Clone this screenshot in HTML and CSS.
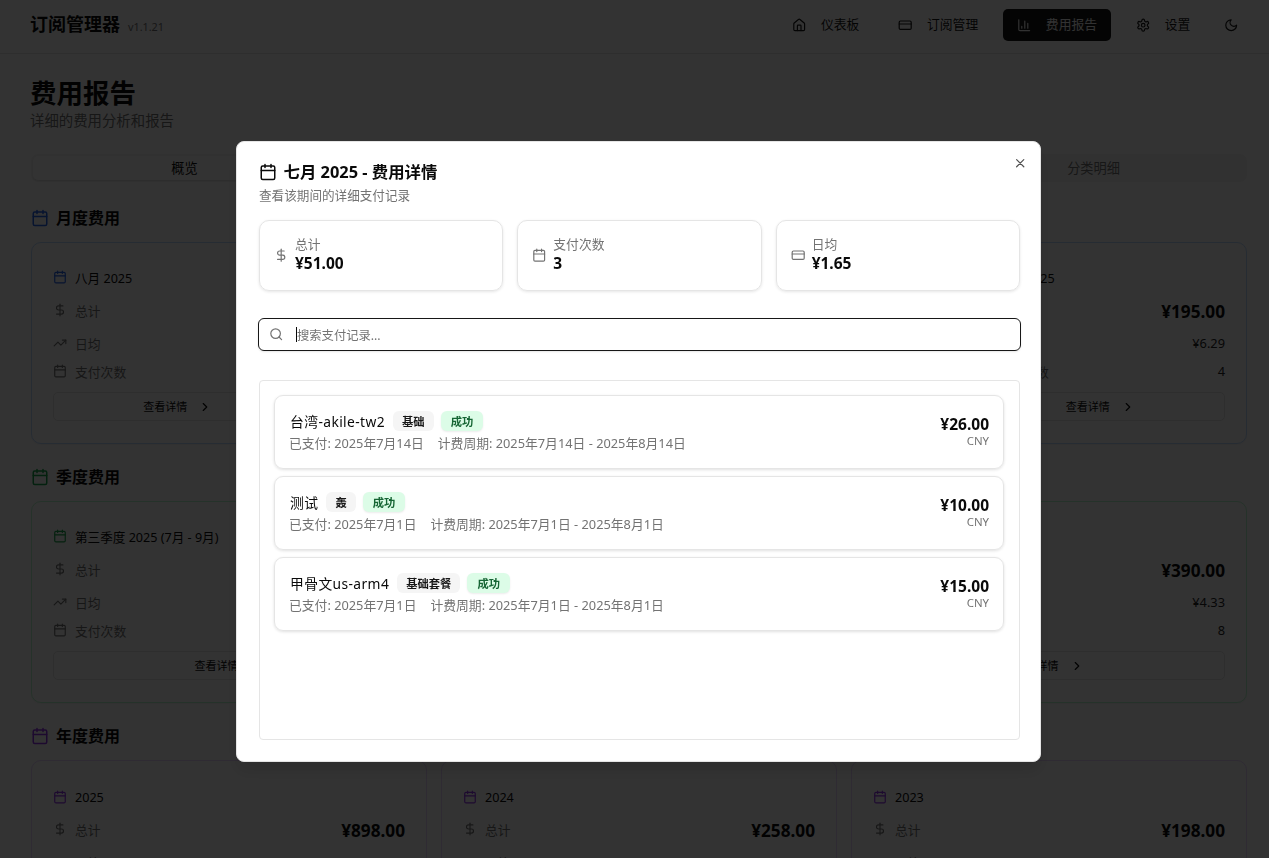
FILE: index.html
```html
<!DOCTYPE html>
<html lang="zh-CN">
<head>
<meta charset="utf-8">
<title>订阅管理器</title>
<link rel="stylesheet" href="styles.css">
</head>
<body>
<svg class="sprite" xmlns="http://www.w3.org/2000/svg">
  <symbol id="i-cal" viewBox="0 0 24 24"><path d="M8 2v4M16 2v4"/><rect x="3" y="4" width="18" height="18" rx="2"/><path d="M3 10h18"/></symbol>
  <symbol id="i-dollar" viewBox="0 0 24 24"><path d="M12 2v20"/><path d="M17 5H9.5a3.5 3.5 0 0 0 0 7h5a3.5 3.5 0 0 1 0 7H6"/></symbol>
  <symbol id="i-trend" viewBox="0 0 24 24"><path d="M22 7l-8.5 8.5-5-5L2 17"/><path d="M16 7h6v6"/></symbol>
  <symbol id="i-card" viewBox="0 0 24 24"><rect x="2" y="5" width="20" height="14" rx="2"/><path d="M2 10h20"/></symbol>
  <symbol id="i-search" viewBox="0 0 24 24"><circle cx="11" cy="11" r="8"/><path d="m21 21-4.3-4.3"/></symbol>
  <symbol id="i-x" viewBox="0 0 24 24"><path d="M18 6 6 18M6 6l12 12"/></symbol>
  <symbol id="i-chev" viewBox="0 0 24 24"><path d="m9 18 6-6-6-6"/></symbol>
  <symbol id="i-home" viewBox="0 0 24 24"><path d="M15 21v-8a1 1 0 0 0-1-1h-4a1 1 0 0 0-1 1v8"/><path d="M3 10a2 2 0 0 1 .709-1.528l7-5.999a2 2 0 0 1 2.582 0l7 5.999A2 2 0 0 1 21 10v9a2 2 0 0 1-2 2H5a2 2 0 0 1-2-2z"/></symbol>
  <symbol id="i-bars" viewBox="0 0 24 24"><path d="M3 3v16a2 2 0 0 0 2 2h16"/><path d="M18 17V9M13 17V5M8 17v-3"/></symbol>
  <symbol id="i-gear" viewBox="0 0 24 24"><path d="M12.22 2h-.44a2 2 0 0 0-2 2v.18a2 2 0 0 1-1 1.73l-.43.25a2 2 0 0 1-2 0l-.15-.08a2 2 0 0 0-2.73.73l-.22.38a2 2 0 0 0 .73 2.73l.15.1a2 2 0 0 1 1 1.72v.51a2 2 0 0 1-1 1.74l-.15.09a2 2 0 0 0-.73 2.73l.22.38a2 2 0 0 0 2.73.73l.15-.08a2 2 0 0 1 2 0l.43.25a2 2 0 0 1 1 1.73V20a2 2 0 0 0 2 2h.44a2 2 0 0 0 2-2v-.18a2 2 0 0 1 1-1.73l.43-.25a2 2 0 0 1 2 0l.15.08a2 2 0 0 0 2.73-.73l.22-.39a2 2 0 0 0-.73-2.73l-.15-.08a2 2 0 0 1-1-1.74v-.5a2 2 0 0 1 1-1.74l.15-.09a2 2 0 0 0 .73-2.73l-.22-.38a2 2 0 0 0-2.73-.73l-.15.08a2 2 0 0 1-2 0l-.43-.25a2 2 0 0 1-1-1.73V4a2 2 0 0 0-2-2z"/><circle cx="12" cy="12" r="3"/></symbol>
  <symbol id="i-moon" viewBox="0 0 24 24"><path d="M12 3a6 6 0 0 0 9 9 9 9 0 1 1-9-9Z"/></symbol>
</svg>

<header class="topbar">
  <div class="brand"><span class="brand-name">订阅管理器</span><span class="version">v1.1.21</span></div>
  <nav class="nav">
    <a class="nav-item"><svg class="ico ico-14"><use href="#i-home"/></svg>仪表板</a>
    <a class="nav-item"><svg class="ico ico-14"><use href="#i-card"/></svg>订阅管理</a>
    <a class="nav-item active"><svg class="ico ico-14"><use href="#i-bars"/></svg>费用报告</a>
    <a class="nav-item"><svg class="ico ico-14"><use href="#i-gear"/></svg>设置</a>
    <a class="theme-btn"><svg class="ico ico-14"><use href="#i-moon"/></svg></a>
  </nav>
</header>

<main class="page">
  <h1 class="page-title">费用报告</h1>
  <p class="page-sub">详细的费用分析和报告</p>
  <div class="tabs">
    <div class="tab active">概览</div>
    <div class="tab">月度趋势</div>
    <div class="tab">支付记录</div>
    <div class="tab">分类明细</div>
  </div>

  <section class="section blue">
    <h2 class="section-title"><svg class="ico ico-18"><use href="#i-cal"/></svg><span class="lift">月度费用</span></h2>
    <div class="grid grid-4">
      <article class="card">
        <div class="card-label"><svg class="ico ico-13 tint"><use href="#i-cal"/></svg>八月 2025</div>
        <div class="row row-total"><span class="row-key"><svg class="ico ico-13"><use href="#i-dollar"/></svg>总计</span><b>¥72.00</b></div>
        <div class="row"><span class="row-key"><svg class="ico ico-13"><use href="#i-trend"/></svg>日均</span><span class="row-val">¥2.32</span></div>
        <div class="row row-count"><span class="row-key"><svg class="ico ico-13"><use href="#i-cal"/></svg>支付次数</span><span class="row-val">3</span></div>
        <button class="detail"><span>查看详情</span><svg class="ico ico-13"><use href="#i-chev"/></svg></button>
      </article>
      <article class="card">
        <div class="card-label"><svg class="ico ico-13 tint"><use href="#i-cal"/></svg>七月 2025</div>
        <div class="row row-total"><span class="row-key"><svg class="ico ico-13"><use href="#i-dollar"/></svg>总计</span><b>¥51.00</b></div>
        <div class="row"><span class="row-key"><svg class="ico ico-13"><use href="#i-trend"/></svg>日均</span><span class="row-val">¥1.65</span></div>
        <div class="row row-count"><span class="row-key"><svg class="ico ico-13"><use href="#i-cal"/></svg>支付次数</span><span class="row-val">3</span></div>
        <button class="detail"><span>查看详情</span><svg class="ico ico-13"><use href="#i-chev"/></svg></button>
      </article>
      <article class="card">
        <div class="card-label"><svg class="ico ico-13 tint"><use href="#i-cal"/></svg>六月 2025</div>
        <div class="row row-total"><span class="row-key"><svg class="ico ico-13"><use href="#i-dollar"/></svg>总计</span><b>¥72.00</b></div>
        <div class="row"><span class="row-key"><svg class="ico ico-13"><use href="#i-trend"/></svg>日均</span><span class="row-val">¥2.40</span></div>
        <div class="row row-count"><span class="row-key"><svg class="ico ico-13"><use href="#i-cal"/></svg>支付次数</span><span class="row-val">1</span></div>
        <button class="detail"><span>查看详情</span><svg class="ico ico-13"><use href="#i-chev"/></svg></button>
      </article>
      <article class="card">
        <div class="card-label"><svg class="ico ico-13 tint"><use href="#i-cal"/></svg>五月 2025</div>
        <div class="row row-total"><span class="row-key"><svg class="ico ico-13"><use href="#i-dollar"/></svg>总计</span><b>¥195.00</b></div>
        <div class="row"><span class="row-key"><svg class="ico ico-13"><use href="#i-trend"/></svg>日均</span><span class="row-val">¥6.29</span></div>
        <div class="row row-count"><span class="row-key"><svg class="ico ico-13"><use href="#i-cal"/></svg>支付次数</span><span class="row-val">4</span></div>
        <button class="detail"><span>查看详情</span><svg class="ico ico-13"><use href="#i-chev"/></svg></button>
      </article>
    </div>
  </section>

  <section class="section green">
    <h2 class="section-title"><svg class="ico ico-18"><use href="#i-cal"/></svg><span class="lift">季度费用</span></h2>
    <div class="grid grid-3">
      <article class="card">
        <div class="card-label"><svg class="ico ico-13 tint"><use href="#i-cal"/></svg>第三季度 2025 (7月 - 9月)</div>
        <div class="row row-total"><span class="row-key"><svg class="ico ico-13"><use href="#i-dollar"/></svg>总计</span><b>¥123.00</b></div>
        <div class="row"><span class="row-key"><svg class="ico ico-13"><use href="#i-trend"/></svg>日均</span><span class="row-val">¥1.34</span></div>
        <div class="row row-count"><span class="row-key"><svg class="ico ico-13"><use href="#i-cal"/></svg>支付次数</span><span class="row-val">6</span></div>
        <button class="detail"><span>查看详情</span><svg class="ico ico-13"><use href="#i-chev"/></svg></button>
      </article>
      <article class="card">
        <div class="card-label"><svg class="ico ico-13 tint"><use href="#i-cal"/></svg>第二季度 2025 (4月 - 6月)</div>
        <div class="row row-total"><span class="row-key"><svg class="ico ico-13"><use href="#i-dollar"/></svg>总计</span><b>¥385.00</b></div>
        <div class="row"><span class="row-key"><svg class="ico ico-13"><use href="#i-trend"/></svg>日均</span><span class="row-val">¥4.23</span></div>
        <div class="row row-count"><span class="row-key"><svg class="ico ico-13"><use href="#i-cal"/></svg>支付次数</span><span class="row-val">7</span></div>
        <button class="detail"><span>查看详情</span><svg class="ico ico-13"><use href="#i-chev"/></svg></button>
      </article>
      <article class="card">
        <div class="card-label"><svg class="ico ico-13 tint"><use href="#i-cal"/></svg>第一季度 2025 (1月 - 3月)</div>
        <div class="row row-total"><span class="row-key"><svg class="ico ico-13"><use href="#i-dollar"/></svg>总计</span><b>¥390.00</b></div>
        <div class="row"><span class="row-key"><svg class="ico ico-13"><use href="#i-trend"/></svg>日均</span><span class="row-val">¥4.33</span></div>
        <div class="row row-count"><span class="row-key"><svg class="ico ico-13"><use href="#i-cal"/></svg>支付次数</span><span class="row-val">8</span></div>
        <button class="detail"><span>查看详情</span><svg class="ico ico-13"><use href="#i-chev"/></svg></button>
      </article>
    </div>
  </section>

  <section class="section purple">
    <h2 class="section-title"><svg class="ico ico-18"><use href="#i-cal"/></svg><span class="lift">年度费用</span></h2>
    <div class="grid grid-3">
      <article class="card">
        <div class="card-label"><svg class="ico ico-13 tint"><use href="#i-cal"/></svg>2025</div>
        <div class="row row-total"><span class="row-key"><svg class="ico ico-13"><use href="#i-dollar"/></svg>总计</span><b>¥898.00</b></div>
        <div class="row"><span class="row-key"><svg class="ico ico-13"><use href="#i-trend"/></svg>日均</span><span class="row-val">¥2.46</span></div>
      </article>
      <article class="card">
        <div class="card-label"><svg class="ico ico-13 tint"><use href="#i-cal"/></svg>2024</div>
        <div class="row row-total"><span class="row-key"><svg class="ico ico-13"><use href="#i-dollar"/></svg>总计</span><b>¥258.00</b></div>
        <div class="row"><span class="row-key"><svg class="ico ico-13"><use href="#i-trend"/></svg>日均</span><span class="row-val">¥0.70</span></div>
      </article>
      <article class="card">
        <div class="card-label"><svg class="ico ico-13 tint"><use href="#i-cal"/></svg>2023</div>
        <div class="row row-total"><span class="row-key"><svg class="ico ico-13"><use href="#i-dollar"/></svg>总计</span><b>¥198.00</b></div>
        <div class="row"><span class="row-key"><svg class="ico ico-13"><use href="#i-trend"/></svg>日均</span><span class="row-val">¥0.54</span></div>
      </article>
    </div>
  </section>
</main>

<div class="overlay"></div>

<div class="modal" role="dialog">
  <button class="close"><svg class="ico ico-14"><use href="#i-x"/></svg></button>
  <h3 class="modal-title"><svg class="ico ico-18"><use href="#i-cal"/></svg><span class="lift">七月 2025 - 费用详情</span></h3>
  <p class="modal-sub">查看该期间的详细支付记录</p>

  <div class="summary">
    <div class="sum-card"><svg class="ico ico-14"><use href="#i-dollar"/></svg><div class="sum-text"><div class="sum-key">总计</div><div class="sum-val">¥51.00</div></div></div>
    <div class="sum-card"><svg class="ico ico-14"><use href="#i-cal"/></svg><div class="sum-text"><div class="sum-key">支付次数</div><div class="sum-val">3</div></div></div>
    <div class="sum-card"><svg class="ico ico-14"><use href="#i-card"/></svg><div class="sum-text"><div class="sum-key">日均</div><div class="sum-val">¥1.65</div></div></div>
  </div>

  <div class="search"><svg class="ico ico-14"><use href="#i-search"/></svg><span class="caret"></span><span class="placeholder">搜索支付记录...</span></div>

  <div class="list">
    <div class="pay">
      <div class="pay-main">
        <div class="pay-head"><span class="pay-name">台湾-akile-tw2</span><span class="badge">基础</span><span class="badge ok">成功</span></div>
        <div class="pay-meta"><span>已支付: 2025年7月14日</span><span>计费周期: 2025年7月14日 - 2025年8月14日</span></div>
      </div>
      <div class="pay-amt"><div class="amt">¥26.00</div><div class="cur">CNY</div></div>
    </div>
    <div class="pay">
      <div class="pay-main">
        <div class="pay-head"><span class="pay-name">测试</span><span class="badge">轰</span><span class="badge ok">成功</span></div>
        <div class="pay-meta"><span>已支付: 2025年7月1日</span><span>计费周期: 2025年7月1日 - 2025年8月1日</span></div>
      </div>
      <div class="pay-amt"><div class="amt">¥10.00</div><div class="cur">CNY</div></div>
    </div>
    <div class="pay">
      <div class="pay-main">
        <div class="pay-head"><span class="pay-name">甲骨文us-arm4</span><span class="badge">基础套餐</span><span class="badge ok">成功</span></div>
        <div class="pay-meta"><span>已支付: 2025年7月1日</span><span>计费周期: 2025年7月1日 - 2025年8月1日</span></div>
      </div>
      <div class="pay-amt"><div class="amt">¥15.00</div><div class="cur">CNY</div></div>
    </div>
  </div>
</div>
</body>
</html>
```

FILE: styles.css
```css
* { box-sizing: border-box; }
html, body { height: 100%; margin: 0; overflow: hidden; }
body {
  font-family: "Noto Sans", "Noto Sans CJK SC", sans-serif;
  color: #0a0a0a;
  background: #fff;
  font-size: 12.6px;
}
h1, h2, h3, p { margin: 0; }
.sprite { display: none; }
.ico {
  flex: none;
  fill: none;
  stroke: currentColor;
  stroke-width: 2;
  stroke-linecap: round;
  stroke-linejoin: round;
}
.ico-13 { width: 14px; height: 14px; }
.ico-14 { width: 14.4px; height: 14.4px; }
.ico-18 { width: 18px; height: 18px; }
.lift { margin-top: -2px; }

/* top bar */
.topbar {
  height: 54px;
  padding: 0 22px 4px 30px;
  display: flex;
  align-items: center;
  justify-content: space-between;
  border-bottom: 1px solid #e5e5e5;
}
.brand { display: flex; align-items: baseline; gap: 8px; padding-bottom: 2px; }
.brand-name { font-size: 18px; font-weight: 700; line-height: 24px; }
.version { font-size: 10.8px; color: #737373; }
.nav { display: flex; align-items: center; gap: 10.7px; }
.nav-item {
  display: flex;
  align-items: center;
  gap: 14.6px;
  height: 32px;
  padding: 0 14px 2px;
  border-radius: 5px;
  font-size: 12.8px;
  color: #171717;
}
.nav-item .ico { margin-top: 4px; }
.nav-item.active { background: #171717; color: #fafafa; }
.theme-btn { display: flex; width: 32px; height: 32px; align-items: center; justify-content: center; color: #171717; }
.theme-btn .ico { margin-top: 2px; }

/* page */
.page { padding: 21px 22px 0 31px; }
.page-title { font-size: 26.5px; font-weight: 700; line-height: 36px; margin-left: -1px; }
.page-sub { font-size: 14.4px; line-height: 18px; color: #737373; margin: 1px 0 -1px -1px; }
.tabs {
  margin-top: 25px;
  height: 28px;
  display: grid;
  grid-template-columns: repeat(4, 1fr);
  background: #f5f5f5;
  border-radius: 7px;
  padding: 2px;
}
.tab { display: flex; align-items: center; justify-content: center; padding-bottom: 2px; font-size: 13.2px; color: #737373; border-radius: 5px; }
.tab.active { background: #fff; color: #0a0a0a; box-shadow: 0 1px 2px rgba(0,0,0,.1); }

.section { margin-top: 24px; }
.section + .section { margin-top: 21px; }
.section-title { display: flex; align-items: center; gap: 7px; height: 24px; font-size: 16px; font-weight: 700; }
.blue { --tint: #2563eb; --edge: #bfdbfe; }
.green { --tint: #16a34a; --edge: #bbf7d0; }
.purple { --tint: #9333ea; --edge: #e9d5ff; }
.section-title .ico, .tint { color: var(--tint); }
.grid { display: grid; gap: 14px; margin-top: 12px; }
.grid-4 { grid-template-columns: repeat(4, 1fr); }
.grid-3 { grid-template-columns: repeat(3, 1fr); }
.card {
  border: 1px solid var(--edge);
  border-radius: 10px;
  padding: 25px 21px 22px;
  background: #fff;
  box-shadow: 0 1px 2px rgba(0,0,0,.05);
}
.purple .card { padding-top: 27px; }
.purple .card-label { margin-bottom: 11px; }
.card-label { display: flex; align-items: center; gap: 8px; height: 18px; font-size: 12.6px; margin-bottom: 12px; }
.row { display: flex; align-items: center; justify-content: space-between; height: 20px; margin-top: 11px; font-size: 12.8px; color: #737373; }
.row-total { height: 24px; margin-top: 0; }
.row-total b { font-size: 17.2px; color: #0a0a0a; font-weight: 700; margin-top: 2px; }
.row-count { margin-top: 8px; }
.row-val { color: #262626; }
.row-key { display: flex; align-items: center; gap: 8px; }
.detail {
  display: flex;
  align-items: center;
  justify-content: center;
  gap: 11px;
  width: 100%;
  height: 29px;
  margin-top: 11px;
  border: 1px solid #e5e5e5;
  border-radius: 5px;
  background: #fff;
  color: #0a0a0a;
  font: inherit;
  font-size: 11px;
}
.detail span { margin-top: -2px; }

/* overlay + dialog */
.overlay { position: fixed; inset: 0; background: rgba(0,0,0,.8); }
.modal {
  position: fixed;
  left: 236px;
  top: 141px;
  width: 805px;
  height: 621px;
  padding: 20px 19px 21px 21px;
  background: #fff;
  border: 1px solid #e5e5e5;
  border-radius: 8px;
  box-shadow: 0 10px 15px rgba(0,0,0,.1);
  display: flex;
  flex-direction: column;
}
.close {
  position: absolute;
  top: 14px;
  right: 13px;
  padding: 0;
  border: 0;
  background: none;
  color: #525252;
  display: flex;
}
.modal-title { display: flex; align-items: center; gap: 6.5px; height: 20px; padding-left: 1px; font-size: 16.4px; font-weight: 700; color: #0a0a0a; }
.modal-sub { margin-top: 5px; padding-left: 1px; font-size: 12.6px; line-height: 18px; color: #737373; }
.summary { display: grid; grid-template-columns: repeat(3, 1fr); gap: 14px; margin-top: 15px; padding: 0 1px; }
.sum-card {
  height: 71px;
  display: flex;
  align-items: center;
  gap: 6.6px;
  padding: 0 14px;
  border: 1px solid #e5e5e5;
  border-radius: 10px;
  box-shadow: 0 1px 3px rgba(0,0,0,.1);
  color: #737373;
}
.sum-text { margin-top: -2px; }
.sum-key { font-size: 12.8px; line-height: 18px; color: #737373; }
.sum-val { font-size: 15.5px; line-height: 21px; font-weight: 700; color: #0a0a0a; }
.search {
  margin-top: 27px;
  height: 33px;
  display: flex;
  align-items: center;
  padding-left: 10px;
  border: 1px solid #171717;
  border-radius: 6px;
  color: #737373;
  box-shadow: 0 1px 2px rgba(0,0,0,.1);
}
.caret { width: 1px; height: 15px; margin-left: 12.6px; background: #0a0a0a; }
.placeholder { font-size: 12.3px; }
.list {
  margin: 29px 1px 0;
  flex: 1;
  padding: 14px 15px 14px 14px;
  border: 1px solid #e5e5e5;
  border-radius: 4px;
  display: flex;
  flex-direction: column;
  gap: 7px;
}
.pay {
  height: 74px;
  display: flex;
  align-items: center;
  justify-content: space-between;
  padding: 0 14px 0 14px;
  border: 1px solid #e5e5e5;
  border-radius: 9px;
  box-shadow: 0 1px 3px rgba(0,0,0,.12);
}
.pay-main { padding-bottom: 2px; }
.pay-head { display: flex; align-items: center; gap: 8px; height: 22px; padding-left: 1px; }
.pay-head .ok { margin-left: -1px; }
.pay-name { font-size: 13.8px; letter-spacing: .4px; color: #0a0a0a; margin-top: -1px; }
.badge {
  display: flex;
  align-items: center;
  height: 20px;
  padding: 0 9px;
  border-radius: 6px;
  background: #f5f5f5;
  font-size: 11.3px;
  font-weight: 700;
  color: #171717;
}
.badge.ok { background: #dcfce7; color: #166534; padding: 0 10px; box-shadow: 0 1px 2px rgba(0,0,0,.08); }
.pay-meta { display: flex; gap: 14px; margin-top: 2px; font-size: 12.8px; line-height: 18px; color: #737373; }
.pay-amt { text-align: right; margin-top: -3px; }
.amt { font-size: 15.5px; line-height: 20px; font-weight: 700; color: #0a0a0a; }
.cur { font-size: 11.4px; line-height: 13px; color: #737373; }
```
